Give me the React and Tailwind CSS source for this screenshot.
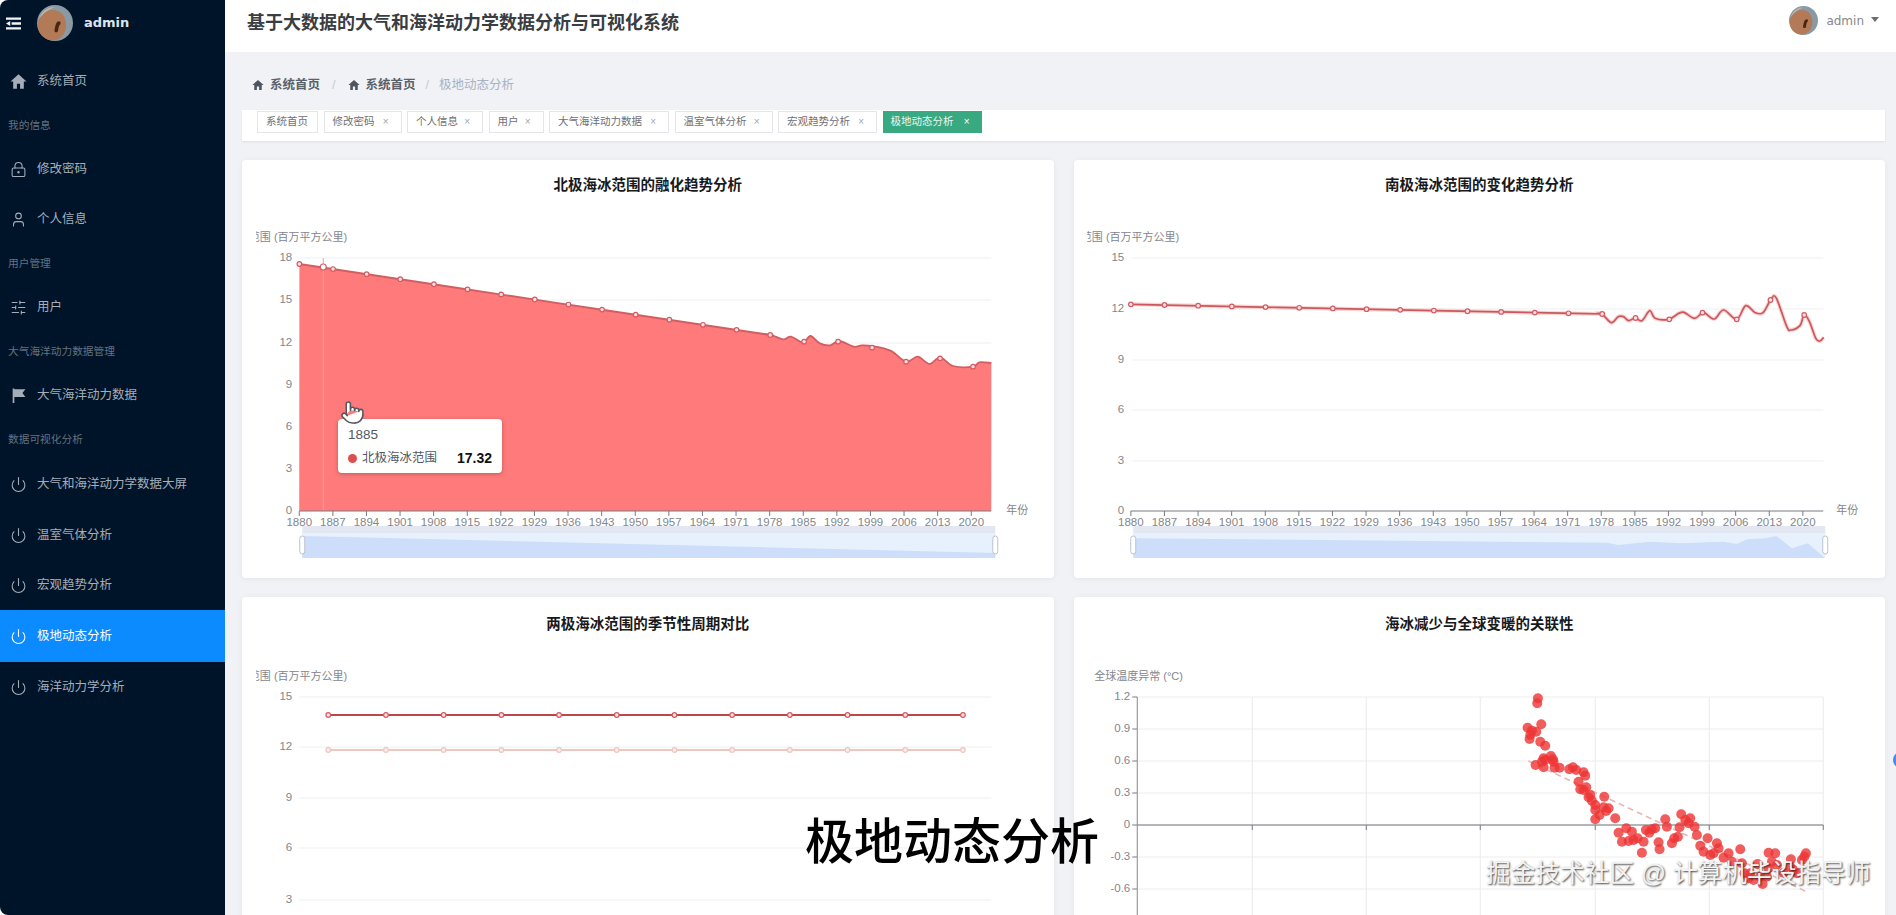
import { LockKeyhole, User, SlidersHorizontal, Power, Pointer } from "lucide-react";

const FONT = "[font-family:'Liberation_Sans','Noto_Sans_CJK_SC',sans-serif]";

// zoom-crop coordinates -> page coordinates
const p1 = ([x, y]) => [240 + x / 1.912, 160 + y / 3];
const p2 = ([x, y]) => [1070 + x / 1.898, 160 + y / 3];

// catmull-rom smoothing through the points
function smooth(pts) {
  let d = `M${pts[0][0]} ${pts[0][1]}`;
  for (let i = 0; i < pts.length - 1; i++) {
    const a = pts[i - 1] || pts[i];
    const b = pts[i];
    const c = pts[i + 1];
    const e = pts[i + 2] || c;
    const c1 = [b[0] + (c[0] - a[0]) / 6, b[1] + (c[1] - a[1]) / 6];
    const c2 = [c[0] - (e[0] - b[0]) / 6, c[1] - (e[1] - b[1]) / 6];
    d += ` C${c1[0]} ${c1[1]} ${c2[0]} ${c2[1]} ${c[0]} ${c[1]}`;
  }
  return d;
}

const years = Array.from({ length: 21 }, (_, i) => 1880 + i * 7);

const arcticPts = [
  [115, 312], [600, 427], [990, 519], [1000, 521], [1017, 525], [1040, 538], [1055, 530], [1078, 548], [1092, 528], [1110, 550],
  [1130, 556], [1147, 543], [1175, 560], [1190, 556], [1210, 558], [1245, 572], [1275, 605],
  [1297, 590], [1320, 612], [1340, 592], [1365, 618], [1403, 620], [1415, 607], [1438, 609],
].map(p1);
const arcticDots = [
  ...Array.from({ length: 15 }, (_, i) => [115 + i * 64.3, 312 + i * 15.2]),
  [1080, 545], [1145, 545], [1210, 563], [1275, 605], [1340, 595], [1403, 620],
].map(p1);

const antarcticPts = [
  [115, 433], [600, 449], [980, 461], [995, 461.500], [1009, 462], [1027, 488], [1040, 470], [1050, 470], [1060, 482], [1072, 474], [1085, 482],
  [1100, 452], [1110, 475], [1136, 478], [1155, 460], [1165, 457], [1185, 475], [1202, 458], [1222, 477],
  [1240, 450], [1265, 478], [1282, 437], [1300, 458], [1315, 458], [1330, 418], [1340, 414], [1360, 500],
  [1368, 510], [1385, 497], [1393, 465], [1403, 485], [1415, 535], [1423, 543], [1430, 532],
].map(p2);
const antarcticDots = [
  ...Array.from({ length: 15 }, (_, i) => [115 + i * 63.9, 433 + i * 2.07]),
  [1073, 474], [1137, 478], [1200, 458], [1265, 478], [1329, 420], [1393, 465],
].map(p2);

const scatter = [
  [113, 55], [111, 70], [123, 133], [82, 143], [95, 152], [108, 155], [90, 165], [88, 177], [120, 185], [135, 197],
  [152, 228], [158, 238], [130, 235], [125, 245], [135, 240], [106, 255], [130, 262], [160, 245], [163, 263], [178, 263],
  [207, 268], [218, 262], [228, 270], [250, 277], [255, 287], [235, 305], [258, 322], [240, 328], [250, 330], [270, 345],
  [265, 352], [275, 362], [312, 350], [285, 375], [310, 382], [325, 385], [318, 393], [285, 390], [285, 418], [345, 415],
  [298, 405], [355, 458], [378, 445], [395, 455], [365, 485], [385, 483], [400, 480], [412, 475], [430, 485], [425, 518],
  [437, 450], [455, 448], [465, 445], [447, 458], [495, 418], [500, 440], [475, 487], [478, 508], [515, 490], [522, 475],
  [533, 470], [543, 403], [555, 420], [570, 415], [565, 430], [538, 442], [583, 440], [590, 465], [622, 475], [600, 497],
  [610, 515], [630, 525], [650, 490], [655, 505], [640, 520], [670, 533], [685, 520], [720, 508], [695, 545], [725, 550],
  [745, 595], [760, 600], [772, 552], [780, 590], [787, 612], [805, 518], [825, 520], [815, 545], [805, 565], [830, 555],
  [850, 578], [872, 538], [870, 560], [890, 580], [905, 540], [917, 520], [912, 530], [733, 580], [750, 580], [880, 570], [800, 590],
].map(([x, y]) => [1500 + x / 3, 680 + y / 3]);

function HomeIcon({ className }) {
  return (
    <svg viewBox="0 0 16 16" className={className} fill="currentColor">
      <path d="M8 1.200 15.500 8H13v6.800H9.500V10h-3v4.800H3V8H.5z" />
    </svg>
  );
}

function FlagIcon({ className }) {
  return (
    <svg viewBox="0 0 16 16" className={className} fill="currentColor">
      <path d="M2.500 1.500h1.600v13.500H2.500zM4.100 2H14.500l-2.800 3.600 2.800 3.700H4.100z" />
    </svg>
  );
}

function Avatar({ className }) {
  return (
    <svg viewBox="0 0 36 36" className={className}>
      <circle cx="18" cy="18" r="18" fill="#8a9aa4" />
      <path d="M1 22C0 12 8 5 16 5c7 0 12 5 13 13 .5 8-3 15-10 17-1 0-3 .5-4 .5C8 35 2 30 1 22z" fill="#b27a56" />
      <path d="M2 14C5 6 11 2 18 2c-6 2-12 6-16 12z" fill="#c9b9a8" />
      <path d="M20 17c2.500-1.500 4-.5 3.500 2-1.500 1-2 3.500-2.500 7-1 2.500-4 1.500-3.500-1 .5-2.500 1-6 2.500-8z" fill="#4a2612" />
    </svg>
  );
}

function MenuItem({ icon: Icon, label, active, tall }) {
  return (
    <div className={`flex items-center pl-[10px] ${active ? "h-[52px] bg-[#0b8bff] text-white" : tall ? "h-[52px] text-[#a5aeb8]" : "h-[50px] text-[#a5aeb8]"}`}>
      <Icon className="h-[17px] w-[17px] shrink-0" strokeWidth={1.500} />
      <span className="ml-[10px] text-[12.500px]">{label}</span>
    </div>
  );
}

function GroupLabel({ children }) {
  return <div className="flex h-[38px] items-center pl-[8px] text-[10.700px] text-[#66717f]">{children}</div>;
}

function Sidebar() {
  return (
    <aside className="flex h-full w-[225px] shrink-0 flex-col rounded-l-[8px] bg-[#001429]">
      <div className="flex h-[46px] items-center pl-[6px]">
        <svg viewBox="0 0 16 13" className="h-[13px] w-[15px]" fill="#f2f5f8">
          <path d="M0 0h16v2.600H0zM6 5.200h10v2.600H6zM0 10.400h16V13H0zM4.500 3.800v5.400L0 6.500z" />
        </svg>
        <Avatar className="ml-[16px] h-[36px] w-[36px]" />
        <span className="ml-[11px] [font-family:'DejaVu_Sans',sans-serif] text-[13px] font-bold text-[#dde4ec]">admin</span>
      </div>
      <div className="pt-[10px]">
        <MenuItem icon={HomeIcon} label="系统首页" />
        <GroupLabel>我的信息</GroupLabel>
        <MenuItem icon={LockKeyhole} label="修改密码" />
        <MenuItem icon={User} label="个人信息" />
        <GroupLabel>用户管理</GroupLabel>
        <MenuItem icon={SlidersHorizontal} label="用户" />
        <GroupLabel>大气海洋动力数据管理</GroupLabel>
        <MenuItem icon={FlagIcon} label="大气海洋动力数据" />
        <GroupLabel>数据可视化分析</GroupLabel>
        <MenuItem icon={Power} label="大气和海洋动力学数据大屏" tall />
        <MenuItem icon={Power} label="温室气体分析" />
        <MenuItem icon={Power} label="宏观趋势分析" />
        <MenuItem icon={Power} label="极地动态分析" active />
        <MenuItem icon={Power} label="海洋动力学分析" />
      </div>
    </aside>
  );
}

function Header() {
  return (
    <header className="flex h-[52px] shrink-0 items-center justify-between bg-white pl-[22px] pr-[17px]">
      <h1 className="pb-[6px] text-[18px] font-bold text-[#3a3d42]">基于大数据的大气和海洋动力学数据分析与可视化系统</h1>
      <div className="mb-[11px] flex items-center">
        <Avatar className="h-[29px] w-[29px]" />
        <span className="ml-[8px] [font-family:'DejaVu_Sans',sans-serif] text-[12px] text-[#85888d]">admin</span>
        <span className="ml-[7px] mb-[3px] h-0 w-0 border-x-[4px] border-t-[5px] border-x-transparent border-t-[#6b6e73]" />
      </div>
    </header>
  );
}

function Breadcrumb() {
  return (
    <div className="flex h-[58px] items-center pl-[10px] pt-[8px] text-[12.500px]">
      <HomeIcon className="h-[12px] w-[12px] text-[#4e5560]" />
      <span className="ml-[6px] font-bold text-[#5a616b]">系统首页</span>
      <span className="mx-[12px] text-[#c6cbd3]">/</span>
      <HomeIcon className="h-[12px] w-[12px] text-[#4e5560]" />
      <span className="ml-[6px] font-bold text-[#5a616b]">系统首页</span>
      <span className="mx-[10px] text-[#c6cbd3]">/</span>
      <span className="text-[#a9b1c2]">极地动态分析</span>
    </div>
  );
}

const tabs = [
  { label: "系统首页", width: "w-[61px]", fixed: true },
  { label: "修改密码", width: "w-[78px]" },
  { label: "个人信息", width: "w-[76px]" },
  { label: "用户", width: "w-[55px]" },
  { label: "大气海洋动力数据", width: "w-[120px]" },
  { label: "温室气体分析", width: "w-[98px]" },
  { label: "宏观趋势分析", width: "w-[99px]" },
  { label: "极地动态分析", width: "w-[99px]", active: true },
];

function TabBar() {
  return (
    <div className="flex h-[31px] items-start gap-[5.500px] bg-white pl-[15px] pt-[1px] shadow-[0_1px_2px_rgba(0,0,0,0.08)]">
      {tabs.map((t) => (
        <div
          key={t.label}
          className={`flex h-[22px] items-center justify-between whitespace-nowrap pl-[8px] text-[10.500px] ${t.fixed ? "pr-[8px]" : "pr-[12px]"} ${t.width} ${
            t.active ? "bg-[#39a981] text-[#eaf7f1]" : "border border-[#e3e5e9] text-[#6d7077]"
          }`}
        >
          <span>{t.label}</span>
          {!t.fixed && <span className={`text-[10px] leading-none ${t.active ? "text-white" : "text-[#a3a6ab]"}`}>×</span>}
        </div>
      ))}
    </div>
  );
}

const axisFill = "#83868c";

// the axis name runs off the left of the chart box, so part of it is cut away
function AxisName({ id, clipX, endX, y }) {
  return (
    <g>
      <clipPath id={id}>
        <rect x={clipX} y={y - 10} width="140" height="20" />
      </clipPath>
      <text x={endX} y={y} fontSize="11" fill={axisFill} textAnchor="end" dominantBaseline="middle" clipPath={`url(#${id})`}>
        海冰范围 (百万平方公里)
      </text>
    </g>
  );
}

function YGrid({ ticks, x0, x1, labelX }) {
  return ticks.map(([label, y]) => (
    <g key={label}>
      {label !== "0" && <line x1={x0} x2={x1} y1={y} y2={y} stroke="#eeeff1" />}
      <text x={labelX} y={y} fontSize="11.500" fill={axisFill} textAnchor="end" dominantBaseline="middle">
        {label}
      </text>
    </g>
  ));
}

function XAxis({ x0, x1, yearName }) {
  return (
    <g>
      <line x1={x0} x2={x1} y1="511" y2="511" stroke="#787b82" />
      {years.map((y, i) => (
        <g key={y}>
          <line x1={x0 + i * 33.6} x2={x0 + i * 33.6} y1="511" y2="516" stroke="#787b82" />
          <text x={x0 + i * 33.6} y="526" fontSize="11.500" fill={axisFill} textAnchor="middle">
            {y}
          </text>
        </g>
      ))}
      <text x={yearName} y="514" fontSize="11" fill={axisFill} textAnchor="middle">年份</text>
    </g>
  );
}

function MiniMap({ x0, x1, shadow }) {
  const pts = [...shadow, [x1, 558], [x0, 558]].map((p) => p.join(" ")).join(" L");
  return (
    <g>
      <rect x={x0} y="526" width={x1 - x0} height="8" fill="#e2e7f1" />
      <rect x={x0} y="533" width={x1 - x0} height="25" fill="#e7f0fd" />
      <path d={`M${pts}Z`} fill="#cddefa" />
      <rect x={x0 - 2.500} y="536" width="5" height="18" rx="2.500" fill="#fff" stroke="#bcc2cc" />
      <rect x={x1 - 2.500} y="536" width="5" height="18" rx="2.500" fill="#fff" stroke="#bcc2cc" />
    </g>
  );
}

function Dots({ pts, r = 2.300, stroke = "#d65a62", fill = "#ffe3e3" }) {
  return pts.map(([x, y], i) => <circle key={i} cx={x} cy={y} r={r} fill={fill} stroke={stroke} strokeWidth="1.200" />);
}

function Card({ title, titleClass, viewBox, children }) {
  return (
    <section className="flex h-[418px] flex-col rounded-[4px] bg-white shadow-[0_1px_6px_rgba(0,0,0,0.06)]">
      <h2 className={`flex shrink-0 items-center justify-center text-[14.500px] font-bold text-[#17191c] ${titleClass}`}>{title}</h2>
      <svg viewBox={viewBox} className="min-h-0 w-full flex-1">
        {children}
      </svg>
    </section>
  );
}

function ArcticChart() {
  const ticks = [["18", 258], ["15", 300], ["12", 343], ["9", 385], ["6", 427], ["3", 469], ["0", 511]];
  const line = smooth(arcticPts);
  return (
    <Card title="北极海冰范围的融化趋势分析" titleClass="h-[52px]" viewBox="243 212 811 366">
      <AxisName id="arctic-name" clipX={257} endX={348} y={238} />
      <YGrid ticks={ticks} x0={300} x1={992} labelX={293} />
      <path d={`${line} L992 511 L300 511Z`} fill="#ff7a7a" />
      <path d={line} fill="none" stroke="#cf5f62" strokeWidth="1.800" />
      <line x1="324" x2="324" y1="258" y2="511" stroke="#ff9c9c" />
      <Dots pts={arcticDots} />
      <circle cx="324" cy="267" r="3" fill="#fff" stroke="#d65a62" strokeWidth="1.200" />
      <XAxis x0={300} x1={992} yearName={1018} />
      <MiniMap x0={303} x1={996} shadow={[[303, 536], [996, 553]]} />
    </Card>
  );
}

function AntarcticChart() {
  const ticks = [["15", 258], ["12", 309], ["9", 360], ["6", 410], ["3", 461], ["0", 511]];
  const shadow = [
    [120, 1135], [1020, 1148], [1040, 1155], [1100, 1145], [1160, 1150], [1240, 1145], [1265, 1152],
    [1285, 1138], [1320, 1135], [1340, 1128], [1370, 1165], [1400, 1150], [1433, 1195],
  ].map(p2);
  return (
    <Card title="南极海冰范围的变化趋势分析" titleClass="h-[52px]" viewBox="1074 212 811 366">
      <AxisName id="antarctic-name" clipX={1087} endX={1179} y={238} />
      <YGrid ticks={ticks} x0={1132} x1={1823} labelX={1124} />
      <path d={smooth(antarcticPts)} fill="none" stroke="#f6b9b5" strokeWidth="4" opacity="0.6" />
      <path d={smooth(antarcticPts)} fill="none" stroke="#c9595f" strokeWidth="1.700" />
      <Dots pts={antarcticDots} />
      <XAxis x0={1130.600} x1={1823} yearName={1847} />
      <MiniMap x0={1133} x1={1825} shadow={shadow} />
    </Card>
  );
}

function SeasonChart() {
  const ticks = [["15", 697], ["12", 747], ["9", 798], ["6", 848], ["3", 900]];
  const xs = Array.from({ length: 12 }, (_, i) => 329 + i * 57.700);
  return (
    <Card title="两极海冰范围的季节性周期对比" titleClass="h-[56px]" viewBox="243 653 811 362">
      <AxisName id="season-name" clipX={257} endX={348} y={677} />
      <YGrid ticks={ticks} x0={300} x1={992} labelX={293} />
      <line x1="329" x2="964" y1="715" y2="715" stroke="#b9474b" strokeWidth="1.800" />
      <Dots pts={xs.map((x) => [x, 715])} />
      <line x1="329" x2="964" y1="750" y2="750" stroke="#efc7bf" strokeWidth="1.800" />
      <Dots pts={xs.map((x) => [x, 750])} stroke="#eec6bf" fill="#fbefed" />
    </Card>
  );
}

function ScatterChart() {
  const ticks = [["1.2", 697], ["0.9", 729], ["0.6", 761], ["0.3", 793], ["0", 825], ["-0.3", 857], ["-0.6", 889]];
  const vertical = [1252, 1366, 1480, 1595, 1709, 1823];
  return (
    <Card title="海冰减少与全球变暖的关联性" titleClass="h-[56px]" viewBox="1074 653 811 362">
      <text x="1094" y="677" fontSize="11" fill={axisFill} dominantBaseline="middle">全球温度异常 (°C)</text>
      {vertical.map((x) => (
        <line key={x} x1={x} x2={x} y1="697" y2="915" stroke="#e9eaec" />
      ))}
      {ticks.map(([label, y]) => (
        <g key={label}>
          <line x1="1137" x2="1823" y1={y} y2={y} stroke={label === "0" ? "#9a9ca1" : "#eceded"} strokeWidth={label === "0" ? 1.500 : 1} />
          <line x1="1132" x2="1137" y1={y} y2={y} stroke="#787b82" />
          <text x="1130" y={y} fontSize="11.500" fill={axisFill} textAnchor="end" dominantBaseline="middle">
            {label}
          </text>
        </g>
      ))}
      {vertical.map((x) => (
        <line key={x} x1={x} x2={x} y1="825" y2="830" stroke="#787b82" />
      ))}
      <line x1="1137" x2="1137" y1="697" y2="915" stroke="#85888e" />
      <line x1="1528" x2="1807" y1="761" y2="892" stroke="#e3b9b5" strokeWidth="1.500" strokeDasharray="6 4" />
      {scatter.map(([x, y], i) => (
        <circle key={i} cx={x} cy={y} r="5" fill="#ee3535" opacity="0.8" />
      ))}
    </Card>
  );
}

export default function App() {
  return (
    <div className={`relative flex h-[915px] w-[1896px] overflow-hidden bg-white ${FONT}`}>
      <Sidebar />
      <main className="flex min-w-0 flex-1 flex-col">
        <Header />
        <div className="min-h-0 flex-1 bg-[#f0f2f5] pl-[17px] pr-[11px]">
          <Breadcrumb />
          <TabBar />
          <div className="mt-[19px] grid grid-cols-2 gap-x-[20px] gap-y-[19px]">
            <ArcticChart />
            <AntarcticChart />
            <SeasonChart />
            <ScatterChart />
          </div>
        </div>
      </main>

      {/* hover state on the first chart */}
      <div className="absolute left-[338px] top-[419px] h-[54px] w-[164px] rounded-[4px] bg-white px-[10px] pt-[8px] shadow-[0_1px_4px_rgba(0,0,0,0.25)]">
        <div className="text-[13.500px] leading-[16px] text-[#55585e]">1885</div>
        <div className="mt-[5px] flex items-center text-[12.500px] text-[#55585e]">
          <span className="h-[9px] w-[9px] rounded-full bg-[#d9504f]" />
          <span className="ml-[5px]">北极海冰范围</span>
          <span className="ml-auto text-[14px] font-bold text-[#111]">17.32</span>
        </div>
      </div>
      <Pointer className="absolute left-[340px] top-[400px] h-[25px] w-[25px] fill-white text-[#55585e]" strokeWidth={1.500} />

      {/* video captions */}
      <div className="absolute left-[805px] top-[812px] text-[49px] font-medium leading-[60px] text-black [text-shadow:0_0_3px_#fff]">极地动态分析</div>
      <div className="absolute left-[1486px] top-[859px] whitespace-nowrap text-[24.700px] leading-[30px] text-[#f3f3f3] [text-shadow:1px_1px_2px_rgba(0,0,0,0.75)]">
        掘金技术社区 @ 计算机毕设指导师
      </div>
      <div className="absolute left-[1893px] top-[752px] h-[16px] w-[16px] rounded-full bg-[#3f90ee]" />
    </div>
  );
}
